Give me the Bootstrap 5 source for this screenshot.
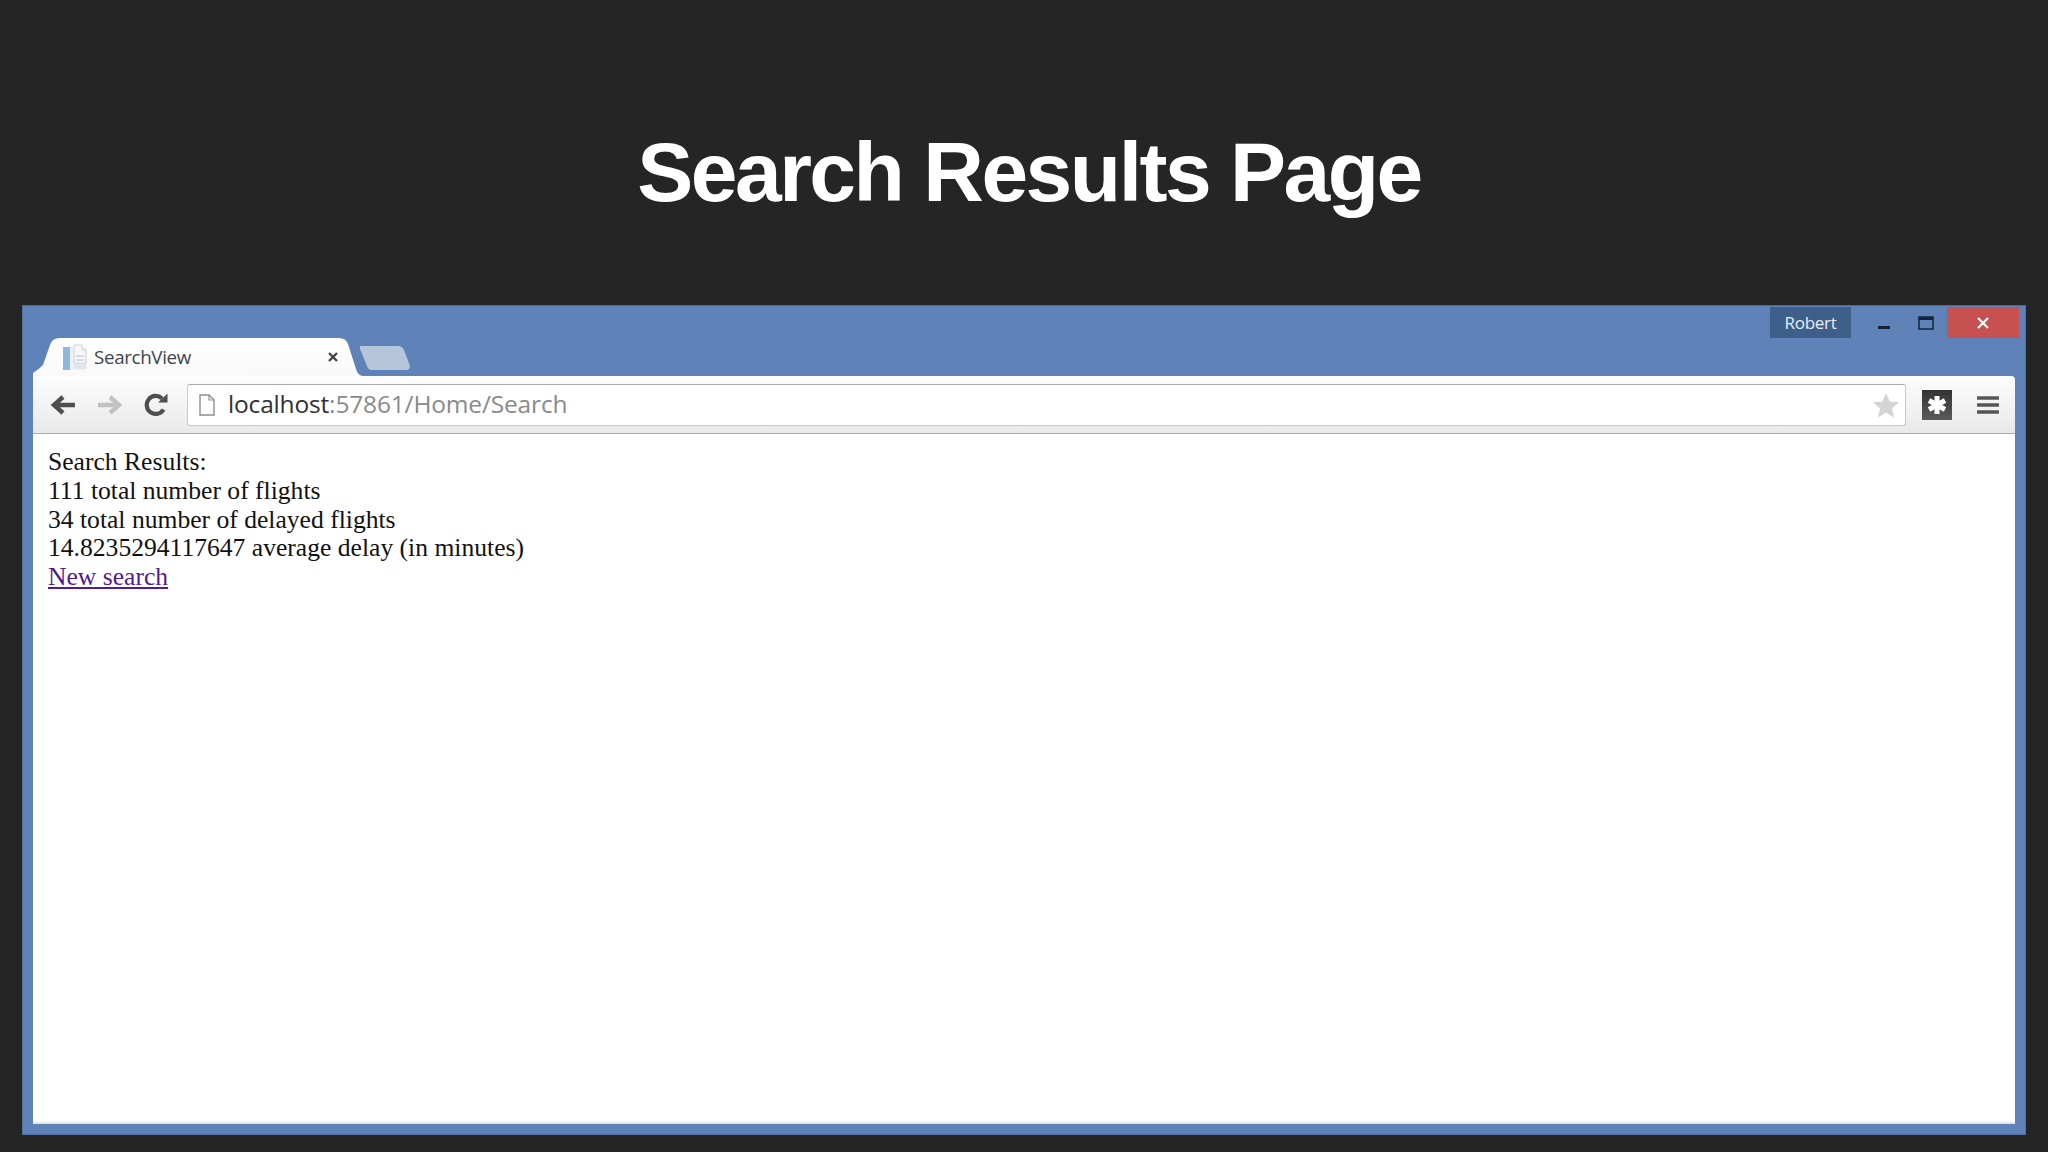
<!doctype html>
<html lang="en"><head><meta charset="utf-8"><title>Search Results Page</title>
<link href="https://cdn.jsdelivr.net/npm/bootstrap@5.3.0/dist/css/bootstrap.min.css" rel="stylesheet">
<style>
html,body{height:100%}
body{background:#252525;overflow:hidden}
.slide-head{height:305px;padding-top:130px;padding-left:10px}
.slide-title{font:700 84px/1 "Liberation Sans",Arial,sans-serif;letter-spacing:-2.5px;color:#fff;margin:0}
.win{margin:0 22px;height:830px;background:#5f83b8;border:1px solid #4f709f;border-top-color:#4a6a98;padding:0 10px 10px}
.win-top{height:32px;margin-right:-4px;padding-top:1px}
.profile{width:81px;height:31px;background:#3f5f8b;color:#e8edf4;font:17px/31px "Open Sans",sans-serif;letter-spacing:-.3px}
.ctl{width:42px;height:31px}
.ctl-gap{margin-left:12px}
.ctl-close{width:72px;background:#c75050}
.tabs{height:38px}
.tab{width:330px;height:38px;background:linear-gradient(#fff,#f9f9f9);clip-path:path("M0 38V35Q6 31 10 27L17 7Q19 0 27 0H306Q313 0 315 6L323 31Q325 38 330 38Z");padding-left:29px;padding-right:23px}
.tab-name{font:18.8px/1 "Open Sans",sans-serif;letter-spacing:-.35px;color:#3b4650;margin-left:6px}
.newtab{width:50px;height:24px;margin:0 0 6px -3px;background:#b6c6da;clip-path:path("M0 0H38Q42 0 44 4L50 20Q50 24 46 24H12Q8 24 7 20L0 3Z")}
.toolbar{height:58px;background:linear-gradient(#fdfdfd,#e9e9e9);border-bottom:1px solid #a9a9a9;border-top-right-radius:4px;padding:0 15px 0 7px}
.tool{width:46px}
.tool-wide{width:47px}
.omni{width:1719px;height:42px;margin-left:8px;background:#fff;border:1px solid #c9c9c9;border-top-color:#aaa;border-radius:3px;padding:0 5px 0 10px;font:24.5px/1 "Open Sans",sans-serif;letter-spacing:-.17px;color:#8a8a8a}
.host{color:#303030}
.omni-url{margin-left:12px}
.ext{width:30px;height:30px;background:linear-gradient(#333,#5a5a5a);margin-left:16px}
.menu-ic{margin-left:25px}
.pg{height:690px;background:#fff;padding:14px 15px;font:25.6px/28.75px "Liberation Serif","Times New Roman",serif;color:#111;border-bottom:2px solid #e6e6e6}
.pg a{color:#551a8b}
</style></head>
<body>
<header class="slide-head text-center"><h1 class="slide-title">Search Results Page</h1></header>
<main class="win">
  <div class="win-top d-flex justify-content-end align-items-start">
    <div class="profile text-center">Robert</div>
    <div class="ctl ctl-gap d-flex align-items-center justify-content-center"><svg width="16" height="16" viewBox="0 0 16 16"><rect x="2" y="11" width="12" height="3" fill="#14233c"/></svg></div>
    <div class="ctl d-flex align-items-center justify-content-center"><svg width="18" height="16" viewBox="0 0 18 16"><rect x="2" y="2" width="14" height="12" fill="none" stroke="#14233c" stroke-width="1.5"/><rect x="2" y="2" width="14" height="3" fill="#14233c"/></svg></div>
    <div class="ctl ctl-close d-flex align-items-center justify-content-center"><svg width="14" height="14" viewBox="0 0 14 14"><path d="M2 2L12 12M12 2L2 12" stroke="#fff" stroke-width="2.2"/></svg></div>
  </div>
  <div class="tabs d-flex align-items-end">
    <div class="tab d-flex align-items-center">
      <svg width="26" height="28" viewBox="0 0 26 28" class="flex-shrink-0"><rect x="1" y="4" width="24" height="23" fill="#eef1f4"/><rect x="1" y="4" width="7" height="23" fill="#8db8dc"/><path d="M12 2h8v5h4v13h-12z" fill="#f6f7f8" stroke="#ccd3d9"/><path d="M14 13h8M14 17h8" stroke="#b9c2ca"/><rect x="12" y="21" width="12" height="5" fill="#e2e7ec"/></svg>
      <span class="tab-name flex-grow-1">SearchView</span>
      <svg width="14" height="14" viewBox="0 0 14 14"><path d="M3 3L11 11M11 3L3 11" stroke="#444" stroke-width="2.4"/></svg>
    </div>
    <div class="newtab"></div>
  </div>
  <div class="toolbar d-flex align-items-center">
    <div class="tool d-flex justify-content-center"><svg width="28" height="24" viewBox="0 0 28 24"><path d="M26 12H7M14 4L5 12L14 20" fill="none" stroke="#4e4e4e" stroke-width="4.4"/></svg></div>
    <div class="tool tool-wide d-flex justify-content-center"><svg width="28" height="24" viewBox="0 0 28 24"><path d="M2 12H21M14 4L23 12L14 20" fill="none" stroke="#c2c2c2" stroke-width="4.4"/></svg></div>
    <div class="tool d-flex justify-content-center"><svg width="26" height="26" viewBox="0 0 26 26"><path d="M20.5 17.5A9 9 0 1 1 19 6.5" fill="none" stroke="#4e4e4e" stroke-width="4.2"/><path d="M15 10.5L24.500 10.500V1.500Z" fill="#4e4e4e"/></svg></div>
    <div class="omni d-flex align-items-center">
      <svg width="18" height="22" viewBox="0 0 18 22" class="flex-shrink-0"><path d="M2 1H11L16 6V21H2Z" fill="#fff" stroke="#8f8f8f" stroke-width="1.4"/><path d="M11 1V6H16" fill="none" stroke="#8f8f8f" stroke-width="1.2"/></svg>
      <span class="omni-url flex-grow-1"><span class="host">localhost</span>:57861/Home/Search</span>
      <svg width="28" height="26" viewBox="0 0 28 26"><path d="M14 1L17.700 9.500L27 10.300L20 16.400L22.100 25.500L14 20.700L5.900 25.500L8 16.400L1 10.300L10.300 9.500Z" fill="#d4d4d4"/></svg>
    </div>
    <div class="ext d-flex align-items-center justify-content-center flex-shrink-0"><svg width="22" height="22" viewBox="0 0 22 22"><path d="M11 2V20M3 6.500L19 15.500M19 6.500L3 15.500" stroke="#fff" stroke-width="5"/></svg></div>
    <svg class="menu-ic flex-shrink-0" width="22" height="20" viewBox="0 0 22 20"><path d="M1 3H21M1 10H21M1 17H21" stroke="#555" stroke-width="3.600" stroke-linecap="round"/></svg>
  </div>
  <div class="pg">
    Search Results:<br>
    111 total number of flights<br>
    34 total number of delayed flights<br>
    14.8235294117647 average delay (in minutes)<br>
    <a href="#">New search</a>
  </div>
</main>
<script src="https://cdn.jsdelivr.net/npm/bootstrap@5.3.0/dist/js/bootstrap.bundle.min.js"></script>
</body></html>
